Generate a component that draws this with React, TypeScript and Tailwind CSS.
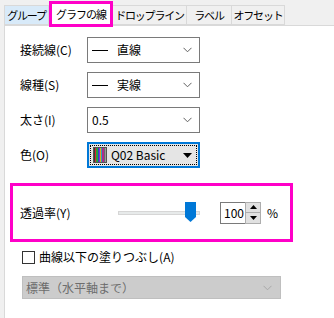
import React from "react";

const font = { fontFamily: '"Noto Sans CJK JP", "Noto Sans", sans-serif' };

function Chevron({ color = "#606060" }: { color?: string }) {
  return (
    <svg width="9" height="6" viewBox="0 0 9 6" className="shrink-0">
      <path d="M0.5 0.8 L4.5 4.8 L8.5 0.8" fill="none" stroke={color} strokeWidth="1" />
    </svg>
  );
}

function Combo({ children }: { children: React.ReactNode }) {
  return (
    <div className="w-[113px] h-[26px] border border-[#7a7a7a] bg-white flex items-center pl-[4px] pr-[7px]">
      <div className="flex-1 flex items-center text-[12px] text-black">{children}</div>
      <Chevron />
    </div>
  );
}

function Row({ label, children }: { label: string; children: React.ReactNode }) {
  return (
    <div className="flex items-center">
      <span className="w-[67px] text-[12px] text-black">{label}</span>
      {children}
    </div>
  );
}

function LineSample({ text }: { text: string }) {
  return (
    <>
      <span className="w-[16px] h-px bg-black mr-[9px]" />
      <span>{text}</span>
    </>
  );
}

function Swatch() {
  const colors = ["#3a3a3a", "#d8262d", "#27a33a", "#2747c9", "#8b2bd1", "#e3a31d", "#2aa3b8", "#b02a8e", "#6a6a6a", "#9b9b9b"];
  return (
    <div className="flex h-[16px] border border-[#555] mr-[4px]">
      {colors.map((c, i) => (
        <span key={i} className="w-[1.2px] h-full" style={{ background: c }} />
      ))}
    </div>
  );
}

function Tab({ label, width, hover, selected }: { label: string; width: string; hover?: boolean; selected?: boolean }) {
  if (selected) {
    return (
      <div
        className={`relative z-10 -mb-[2px] h-[26px] ${width} border-[3px] border-[#ff00c8] bg-white flex items-center justify-center whitespace-nowrap text-[11px] tracking-[-1px] text-black`}
      >
        {label}
      </div>
    );
  }
  return (
    <div
      className={`h-[20px] ${width} border border-[#d9d9d9] -ml-px flex items-center justify-center whitespace-nowrap text-[11px] tracking-[-1.2px] text-black ${
        hover ? "bg-[#d8eaf9]" : "bg-[#f0f0f0]"
      }`}
    >
      {label}
    </div>
  );
}

export default function App() {
  return (
    <div className="w-[334px] h-[318px] bg-[#f0f0f0] overflow-hidden" style={font}>
      <div className="h-[25px] pl-[5px] flex items-end">
        <Tab label="グループ" width="w-[45px]" hover />
        <Tab label="グラフの線" width="w-[64px]" selected />
        <Tab label="ドロップライン" width="w-[75px]" />
        <Tab label="ラベル" width="w-[46px]" />
        <Tab label="オフセット" width="w-[54px]" />
      </div>
      <div className="ml-[4px] h-[293px] border-l border-t border-[#d9d9d9] bg-white pt-[11px]">
        <div className="pl-[15px] flex flex-col gap-[9px]">
          <Row label="接続線(C)">
            <Combo>
              <LineSample text="直線" />
            </Combo>
          </Row>
          <Row label="線種(S)">
            <Combo>
              <LineSample text="実線" />
            </Combo>
          </Row>
          <Row label="太さ(I)">
            <Combo>0.5</Combo>
          </Row>
          <Row label="色(O)">
            <div className="w-[113px] h-[26px] border-2 border-[#0078d7] bg-[#e5e5e5] p-px">
              <div className="h-full border border-dotted border-black flex items-center pl-[2px] pr-[4px]">
                <Swatch />
                <span className="flex-1 text-[12px] text-black">Q02 Basic</span>
                <svg width="9" height="5" viewBox="0 0 9 5">
                  <path d="M0 0 H9 L4.5 5 Z" fill="#000" />
                </svg>
              </div>
            </div>
          </Row>
        </div>

        <div className="ml-[5px] mt-[15px] w-[283px] h-[59px] border-[3px] border-[#ff00c8] flex items-center pl-[7px]">
          <span className="w-[98px] text-[12px] text-black">透過率(Y)</span>
          <div className="relative w-[82px] h-[20px] flex items-center">
            <div className="w-full h-[4px] bg-[#e7eaea] border border-[#d6d6d6]" />
            <svg className="absolute right-[4px] top-[-1px]" width="11" height="20" viewBox="0 0 11 20">
              <path d="M0 0 H11 V15 L5.5 20 L0 15 Z" fill="#0078d7" />
            </svg>
          </div>
          <div className="ml-[20px] flex h-[22px]">
            <div className="w-[26px] border border-[#7a7a7a] flex items-center justify-end pr-px text-[12px] text-black">
              100
            </div>
            <div className="flex flex-col w-[16px] -ml-px">
              <div className="h-[11px] border border-[#adadad] bg-[#e1e1e1] flex items-center justify-center">
                <svg width="7" height="4" viewBox="0 0 7 4">
                  <path d="M0 4 H7 L3.5 0 Z" fill="#000" />
                </svg>
              </div>
              <div className="h-[11px] border border-t-0 border-[#adadad] bg-[#e1e1e1] flex items-center justify-center">
                <svg width="7" height="4" viewBox="0 0 7 4">
                  <path d="M0 0 H7 L3.5 4 Z" fill="#000" />
                </svg>
              </div>
            </div>
          </div>
          <span className="ml-[6px] text-[12px] text-black">%</span>
        </div>

        <div className="pl-[17px] mt-[7px] flex items-center h-[16px]">
          <span className="w-[13px] h-[13px] border border-[#333] bg-white mr-[4px]" />
          <span className="text-[12px] text-black">曲線以下の塗りつぶし(A)</span>
        </div>
        <div className="ml-[17px] mt-[11px] w-[259px] h-[23px] border border-[#bfbfbf] bg-[#cccccc] flex items-center pl-[3px] pr-[8px]">
          <span className="flex-1 text-[12px] text-[#6d6d6d]">標準（水平軸まで）</span>
          <Chevron color="#a8a8a8" />
        </div>
      </div>
    </div>
  );
}
